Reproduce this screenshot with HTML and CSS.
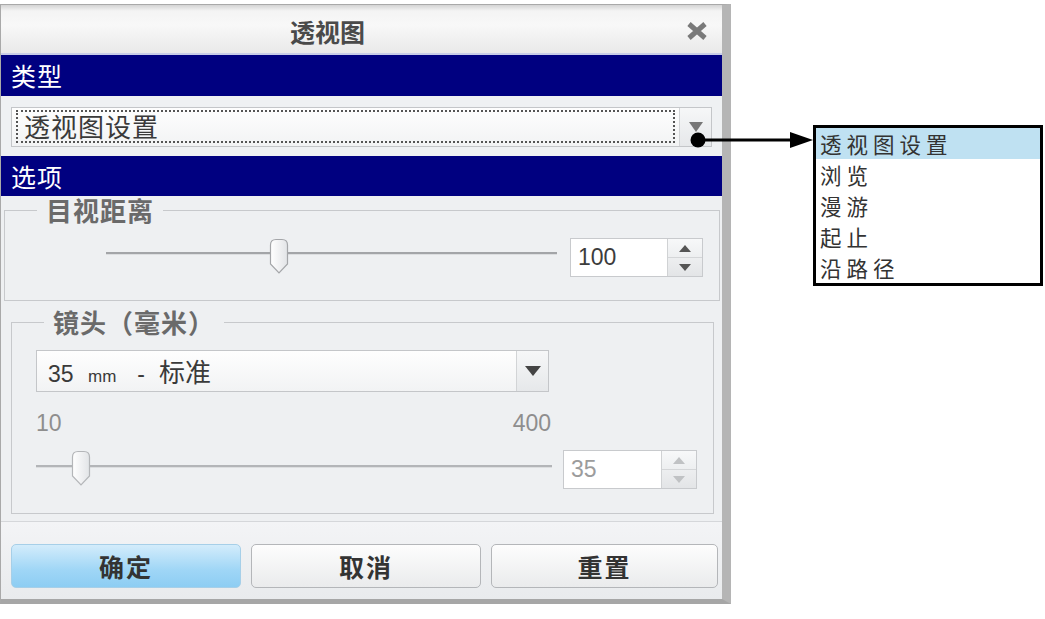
FILE: index.html
```html
<!DOCTYPE html>
<html lang="zh">
<head>
<meta charset="utf-8">
<title>透视图</title>
<link rel="stylesheet" href="styles.css">
</head>
<body>
<div class="stage">
  <div class="dialog">
    <div class="titlebar">
      <span class="title">透视图</span>
      <span class="close">
        <svg width="22" height="18" viewBox="0 0 22 18"><path d="M3 2 L19 16 M19 2 L3 16" stroke="#7a7a7a" stroke-width="5" stroke-linecap="butt"/></svg>
      </span>
    </div>
    <div class="section-bar first">类型</div>
    <div class="type-row">
      <div class="combo type-combo">
        <span class="combo-text"><span class="focus-rect">透视图设置</span></span>
        <span class="combo-btn"><span class="tri-down light"></span></span>
      </div>
    </div>
    <div class="section-bar">选项</div>
    <div class="options">
      <fieldset class="group g-distance">
        <legend>目视距离</legend>
        <div class="slider-row">
          <div class="slider">
            <div class="track"></div>
            <span class="thumb" style="left: 36.2%">
              <svg width="20" height="37" viewBox="0 0 20 37"><defs><linearGradient id="tg1" x1="0" y1="0" x2="1" y2="0"><stop offset="0" stop-color="#ffffff"/><stop offset="1" stop-color="#e2e4e7"/></linearGradient></defs><path d="M1.5 7 Q1.5 1.5 7 1.5 H13 Q18.5 1.5 18.5 7 V26 L10 35 L1.5 26 Z" fill="url(#tg1)" stroke="#a4a6a9" stroke-width="1.2"/></svg>
            </span>
          </div>
          <div class="spin">
            <span class="spin-value">100</span>
            <span class="spin-btns"><span class="sb"><span class="tri-up"></span></span><span class="sb down"><span class="tri-dn"></span></span></span>
          </div>
        </div>
      </fieldset>
      <fieldset class="group g-lens">
        <legend>镜头（毫米）</legend>
        <div class="combo lens-combo">
          <span class="lens-text">35 <span class="unit">mm</span><span class="dash">-</span><span class="cjk">标准</span></span>
          <span class="combo-btn"><span class="tri-down dark"></span></span>
        </div>
        <div class="range-labels"><span>10</span><span>400</span></div>
        <div class="slider-row lens-row">
          <div class="slider">
            <div class="track"></div>
            <span class="thumb" style="left: 6.7%">
              <svg width="20" height="37" viewBox="0 0 20 37"><defs><linearGradient id="tg2" x1="0" y1="0" x2="1" y2="0"><stop offset="0" stop-color="#ffffff"/><stop offset="1" stop-color="#e2e4e7"/></linearGradient></defs><path d="M1.5 7 Q1.5 1.5 7 1.5 H13 Q18.5 1.5 18.5 7 V26 L10 35 L1.5 26 Z" fill="url(#tg2)" stroke="#b4b6b9" stroke-width="1.2"/></svg>
            </span>
          </div>
          <div class="spin disabled">
            <span class="spin-value">35</span>
            <span class="spin-btns"><span class="sb"><span class="tri-up"></span></span><span class="sb down"><span class="tri-dn"></span></span></span>
          </div>
        </div>
      </fieldset>
    </div>
    <div class="footer">
      <button class="btn primary">确定</button>
      <button class="btn">取消</button>
      <button class="btn">重置</button>
    </div>
  </div>

  <svg class="pointer" width="130" height="26" viewBox="0 0 130 26">
    <circle cx="10" cy="12" r="7.5" fill="#000"/>
    <line x1="10" y1="12" x2="106" y2="12" stroke="#000" stroke-width="3"/>
    <polygon points="102,4 125,12 102,20" fill="#000"/>
  </svg>

  <ul class="callout">
    <li class="sel">透视图设置</li>
    <li>浏览</li>
    <li>漫游</li>
    <li>起止</li>
    <li>沿路径</li>
  </ul>
</div>
</body>
</html>
```

FILE: styles.css
```css
* { box-sizing: border-box; }
html, body { margin: 0; padding: 0; background: #ffffff; }
body {
  font-family: "Noto Sans CJK SC", "Liberation Sans", sans-serif;
  color: #333;
}
.stage {
  position: relative;
  width: 1045px;
  height: 619px;
  padding-top: 4px;
}
.dialog {
  width: 731px;
  border: 1px solid #a9a9a9;
  border-right: 9px solid #b5b5b5;
  border-bottom: 5px solid #a6a6a6;
  background: #eef0f2;
  display: flex;
  flex-direction: column;
}
.titlebar {
  height: 50px;
  padding-top: 4px;
  display: flex;
  align-items: center;
  background: linear-gradient(#d4d4d4 0, #f4f4f4 6px, #f8f8f8 20px, #e9e9e9 100%);
  border-bottom: 2px solid #c9cde8;
}
.title {
  margin-left: 289px;
  font-size: 25px;
  line-height: 30px;
  font-weight: bold;
  color: #4a4a4a;
}
.close {
  margin-left: auto;
  margin-right: 14px;
  display: flex;
}
.section-bar {
  height: 40px;
  background: #000080;
  color: #ffffff;
  font-size: 25px;
  line-height: 40px;
  padding-left: 10px;
  letter-spacing: 1px;
}
.section-bar.first { height: 41px; line-height: 41px; }
.type-row {
  padding: 11px 10px 9px 10px;
  background: #eff1f3;
}
.combo {
  display: flex;
  border: 1px solid #c4c6c9;
  background: linear-gradient(#fefefe, #f2f3f4);
}
.type-combo { height: 40px; }
.combo-text {
  flex: 1;
  display: flex;
  padding: 2px 4px 3px 4px;
}
.focus-rect {
  flex: 1;
  border: 2px dotted #555;
  padding-left: 6px;
  font-size: 26px;
  line-height: 28px;
  letter-spacing: 1px;
  color: #3a3a3a;
}
.combo-btn {
  width: 32px;
  border-left: 1px solid #d2d4d6;
  background: linear-gradient(#f6f7f8, #e6e8ea);
  display: flex;
  align-items: center;
  justify-content: center;
}
.tri-down {
  width: 0;
  height: 0;
  border-left: 7px solid transparent;
  border-right: 7px solid transparent;
  border-top: 10px solid #777;
}
.tri-down.dark { border-top-color: #444; border-left-width: 8px; border-right-width: 8px; }
.options {
  padding-top: 1px;
  padding-bottom: 7px;
  background: #eef0f2;
}
.group {
  margin: 0;
  border: 1px solid #c7c9cc;
  min-width: 0;
}
.group legend {
  padding: 0 9px;
  font-size: 26px;
  line-height: 26px;
  font-weight: bold;
  color: #6a6a6a;
  letter-spacing: 1px;
}
.g-distance {
  margin: 0 2px 0 3px;
  padding: 15px 16px 23px 101px;
}
.g-distance legend { margin-left: -69px; }
.g-lens {
  margin: 8px 8px 0 10px;
  padding: 15px 16px 24px 24px;
}
.g-lens legend { margin-left: 8px; }
.slider-row {
  display: flex;
  align-items: flex-start;
  gap: 13px;
}
.lens-row { gap: 11px; }
.slider {
  position: relative;
  flex: 1;
  height: 39px;
  padding-top: 14px;
}
.lens-row .slider { padding-top: 15px; }
.track {
  height: 2px;
  background: #a3a5a8;
  box-shadow: 0 1px 0 #dcdee0;
}
.lens-row .track { background: #b3b5b8; }
.thumb {
  position: absolute;
  top: 0;
  display: block;
  width: 20px;
  height: 37px;
}
.spin {
  width: 133px;
  height: 39px;
  display: flex;
  border: 1px solid #c8cacd;
  background: #ffffff;
}
.lens-row .spin { width: 134px; }
.spin-value {
  flex: 1;
  padding-left: 7px;
  font-family: "Liberation Sans", sans-serif;
  font-size: 23px;
  line-height: 37px;
  color: #3c3c3c;
}
.spin-btns {
  width: 35px;
  border-left: 1px solid #d0d2d4;
  display: flex;
  flex-direction: column;
  background: linear-gradient(#f7f8f9, #e3e5e7);
}
.sb {
  flex: 1;
  display: flex;
  align-items: center;
  justify-content: center;
}
.sb.down { border-top: 1px solid #d4d6d8; }
.tri-up {
  width: 0; height: 0;
  border-left: 6px solid transparent;
  border-right: 6px solid transparent;
  border-bottom: 7px solid #555;
}
.tri-dn {
  width: 0; height: 0;
  border-left: 6px solid transparent;
  border-right: 6px solid transparent;
  border-top: 7px solid #555;
}
.spin.disabled .spin-value { color: #9c9c9c; }
.spin.disabled .tri-up { border-bottom-color: #c0c2c4; }
.spin.disabled .tri-dn { border-top-color: #c0c2c4; }
.lens-combo {
  width: 513px;
  height: 42px;
}
.lens-text {
  flex: 1;
  padding-left: 11px;
  font-family: "Liberation Sans", "Noto Sans CJK SC", sans-serif;
  font-size: 23px;
  line-height: 40px;
  color: #3a3a3a;
  word-spacing: 8px;
  white-space: nowrap;
}
.lens-text .unit { font-size: 17px; }
.lens-text .dash { margin: 0 14px 0 21px; }
.lens-text .cjk {
  font-family: "Noto Sans CJK SC", sans-serif;
  font-size: 26px;
}
.range-labels {
  width: 515px;
  display: flex;
  justify-content: space-between;
  margin-top: 18px;
  margin-bottom: 14px;
  font-family: "Liberation Sans", sans-serif;
  font-size: 23px;
  line-height: 26px;
  color: #8e8e8e;
}
.footer {
  border-top: 1px solid #d5d7da;
  background: linear-gradient(#f3f4f6, #e9ebed);
  padding: 22px 5px 11px 10px;
  display: grid;
  grid-template-columns: 230px 230px 227px;
  column-gap: 10px;
}
.btn {
  height: 44px;
  border: 1px solid #b4b6b9;
  border-radius: 5px;
  background: linear-gradient(#fdfdfd, #eaebec);
  font-family: "Noto Sans CJK SC", sans-serif;
  font-size: 25px;
  font-weight: bold;
  color: #333;
  letter-spacing: 2px;
  padding: 0;
}
.btn.primary {
  border-color: #a6cfe8;
  background: linear-gradient(#d3ecfb, #9fd6f6 60%, #8dcdf3);
}
.pointer {
  position: absolute;
  left: 688px;
  top: 128px;
}
.callout {
  position: absolute;
  left: 813px;
  top: 125px;
  width: 230px;
  margin: 0;
  padding: 0;
  list-style: none;
  border: 3px solid #000;
  background: #fff;
}
.callout li {
  height: 31px;
  line-height: 31px;
  padding-left: 4px;
  font-size: 21.5px;
  letter-spacing: 5px;
  color: #333;
  white-space: nowrap;
}
.callout li.sel { background: #bfe1f2; }
```
